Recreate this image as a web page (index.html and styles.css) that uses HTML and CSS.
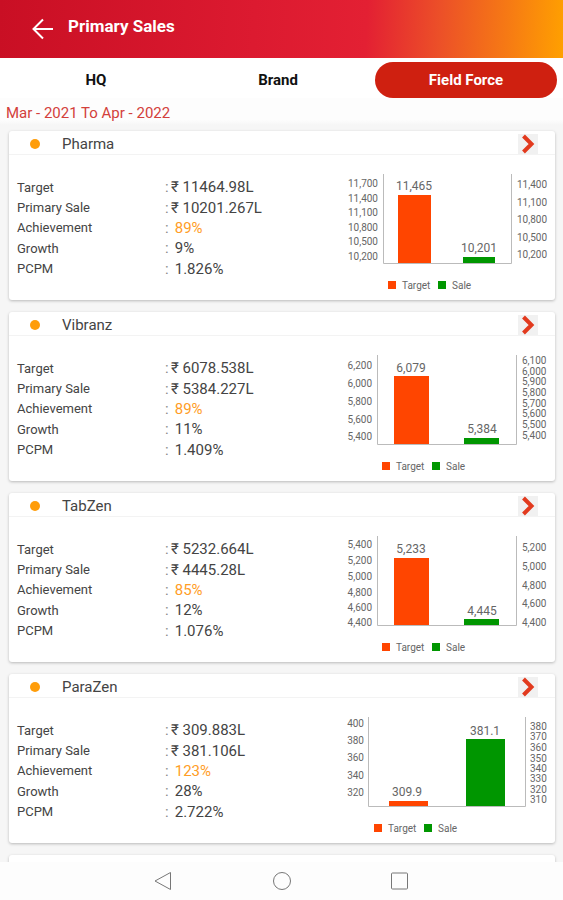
FILE: index.html
```html
<!DOCTYPE html>
<html lang="en">
<head>
<meta charset="utf-8">
<meta name="viewport" content="width=device-width, initial-scale=1">
<title>Primary Sales</title>
<link rel="stylesheet" href="styles.css">
</head>
<body>
<div class="app">
  <header class="topbar">
    <button class="back" type="button" aria-label="Back"><svg width="24" height="24" viewBox="0 0 24 24"><path d="M23 12H4M13 2.500L3.500 12l9.500 9.500"/></svg></button>
    <h1>Primary Sales</h1>
  </header>
  <nav class="tabs">
    <button class="tab" type="button">HQ</button>
    <button class="tab" type="button">Brand</button>
    <button class="tab active" type="button">Field Force</button>
  </nav>
  <p class="period">Mar - 2021 To Apr - 2022</p>
  <main class="list">
    <article class="card">
      <header class="card-head"><span class="dot"></span><h2>Pharma</h2><button class="open" type="button" aria-label="Open Pharma"><svg width="20" height="20" viewBox="0 0 20 20"><path d="M5.500 2L13.500 10l-8 8"/></svg></button></header>
      <div class="card-body">
        <dl>
          <dt>Target</dt><dd><i>:</i>₹ 11464.98L</dd>
          <dt>Primary Sale</dt><dd><i>:</i>₹ 10201.267L</dd>
          <dt>Achievement</dt><dd><i>:</i> <b>89%</b></dd>
          <dt>Growth</dt><dd><i>:</i> 9%</dd>
          <dt>PCPM</dt><dd><i>:</i> 1.826%</dd>
        </dl>
        <svg class="chart" viewBox="0 0 212 140">
          <path class="axis" d="M42.500 19V108.500H170.500V19"/>
          <rect class="target" x="57" y="40" width="33" height="68"/>
          <rect class="sale" x="122" y="102" width="32" height="6"/>
          <g class="value"><text x="73" y="35">11,465</text><text x="138" y="97">10,201</text></g>
          <g class="left"><text x="37" y="32">11,700</text><text x="37" y="47">11,400</text><text x="37" y="61">11,100</text><text x="37" y="76">10,800</text><text x="37" y="90">10,500</text><text x="37" y="105">10,200</text></g>
          <g class="right"><text x="176" y="33">11,400</text><text x="176" y="51">11,100</text><text x="176" y="68">10,800</text><text x="176" y="86">10,500</text><text x="176" y="103">10,200</text></g>
          <rect class="target" x="47" y="126" width="8" height="8"/><text x="61" y="134">Target</text>
          <rect class="sale" x="97" y="126" width="8" height="8"/><text x="111" y="134">Sale</text>
        </svg>
      </div>
    </article>
    <article class="card">
      <header class="card-head"><span class="dot"></span><h2>Vibranz</h2><button class="open" type="button" aria-label="Open Vibranz"><svg width="20" height="20" viewBox="0 0 20 20"><path d="M5.500 2L13.500 10l-8 8"/></svg></button></header>
      <div class="card-body">
        <dl>
          <dt>Target</dt><dd><i>:</i>₹ 6078.538L</dd>
          <dt>Primary Sale</dt><dd><i>:</i>₹ 5384.227L</dd>
          <dt>Achievement</dt><dd><i>:</i> <b>89%</b></dd>
          <dt>Growth</dt><dd><i>:</i> 11%</dd>
          <dt>PCPM</dt><dd><i>:</i> 1.409%</dd>
        </dl>
        <svg class="chart" viewBox="0 0 212 140">
          <path class="axis" d="M36.500 19V108.500H175.500V19"/>
          <rect class="target" x="53" y="40" width="35" height="68"/>
          <rect class="sale" x="123" y="102" width="35" height="6"/>
          <g class="value"><text x="70" y="36">6,079</text><text x="141" y="97">5,384</text></g>
          <g class="left"><text x="31" y="33">6,200</text><text x="31" y="51">6,000</text><text x="31" y="69">5,800</text><text x="31" y="87">5,600</text><text x="31" y="104">5,400</text></g>
          <g class="right"><text x="181" y="28">6,100</text><text x="181" y="39">6,000</text><text x="181" y="49">5,900</text><text x="181" y="60">5,800</text><text x="181" y="71">5,700</text><text x="181" y="81">5,600</text><text x="181" y="92">5,500</text><text x="181" y="103">5,400</text></g>
          <rect class="target" x="41" y="126" width="8" height="8"/><text x="55" y="134">Target</text>
          <rect class="sale" x="91" y="126" width="8" height="8"/><text x="105" y="134">Sale</text>
        </svg>
      </div>
    </article>
    <article class="card">
      <header class="card-head"><span class="dot"></span><h2>TabZen</h2><button class="open" type="button" aria-label="Open TabZen"><svg width="20" height="20" viewBox="0 0 20 20"><path d="M5.500 2L13.500 10l-8 8"/></svg></button></header>
      <div class="card-body">
        <dl>
          <dt>Target</dt><dd><i>:</i>₹ 5232.664L</dd>
          <dt>Primary Sale</dt><dd><i>:</i>₹ 4445.28L</dd>
          <dt>Achievement</dt><dd><i>:</i> <b>85%</b></dd>
          <dt>Growth</dt><dd><i>:</i> 12%</dd>
          <dt>PCPM</dt><dd><i>:</i> 1.076%</dd>
        </dl>
        <svg class="chart" viewBox="0 0 212 140">
          <path class="axis" d="M36.500 19V108.500H175.500V19"/>
          <rect class="target" x="53" y="41" width="35" height="67"/>
          <rect class="sale" x="123" y="102" width="35" height="6"/>
          <g class="value"><text x="70" y="36">5,233</text><text x="141" y="98">4,445</text></g>
          <g class="left"><text x="31" y="31">5,400</text><text x="31" y="47">5,200</text><text x="31" y="63">5,000</text><text x="31" y="79">4,800</text><text x="31" y="94">4,600</text><text x="31" y="109">4,400</text></g>
          <g class="right"><text x="181" y="34">5,200</text><text x="181" y="53">5,000</text><text x="181" y="72">4,800</text><text x="181" y="90">4,600</text><text x="181" y="109">4,400</text></g>
          <rect class="target" x="41" y="126" width="8" height="8"/><text x="55" y="134">Target</text>
          <rect class="sale" x="91" y="126" width="8" height="8"/><text x="105" y="134">Sale</text>
        </svg>
      </div>
    </article>
    <article class="card">
      <header class="card-head"><span class="dot"></span><h2>ParaZen</h2><button class="open" type="button" aria-label="Open ParaZen"><svg width="20" height="20" viewBox="0 0 20 20"><path d="M5.500 2L13.500 10l-8 8"/></svg></button></header>
      <div class="card-body">
        <dl>
          <dt>Target</dt><dd><i>:</i>₹ 309.883L</dd>
          <dt>Primary Sale</dt><dd><i>:</i>₹ 381.106L</dd>
          <dt>Achievement</dt><dd><i>:</i> <b>123%</b></dd>
          <dt>Growth</dt><dd><i>:</i> 28%</dd>
          <dt>PCPM</dt><dd><i>:</i> 2.722%</dd>
        </dl>
        <svg class="chart" viewBox="0 0 212 140">
          <path class="axis" d="M27.500 19V108.500H184.500V19"/>
          <rect class="target" x="48" y="103" width="39" height="5"/>
          <rect class="sale" x="125" y="41" width="39" height="67"/>
          <g class="value"><text x="66" y="98">309.9</text><text x="144" y="37">381.1</text></g>
          <g class="left"><text x="23" y="29">400</text><text x="23" y="46">380</text><text x="23" y="63">360</text><text x="23" y="81">340</text><text x="23" y="98">320</text></g>
          <g class="right"><text x="189" y="32">380</text><text x="189" y="42">370</text><text x="189" y="53">360</text><text x="189" y="64">350</text><text x="189" y="74">340</text><text x="189" y="84">330</text><text x="189" y="95">320</text><text x="189" y="105">310</text></g>
          <rect class="target" x="33" y="126" width="8" height="8"/><text x="47" y="134">Target</text>
          <rect class="sale" x="83" y="126" width="8" height="8"/><text x="97" y="134">Sale</text>
        </svg>
      </div>
    </article>
    <article class="card"></article>
  </main>
  <nav class="system">
    <button type="button" aria-label="Back"><svg width="20" height="20" viewBox="0 0 20 20"><path d="M16.500 1.500v17L1 10z"/></svg></button>
    <button type="button" aria-label="Home"><svg width="20" height="20" viewBox="0 0 20 20"><circle cx="10" cy="10" r="8.500"/></svg></button>
    <button type="button" aria-label="Recent apps"><svg width="20" height="20" viewBox="0 0 20 20"><rect x="1.500" y="2" width="16" height="16" rx="1"/></svg></button>
  </nav>
</div>
</body>
</html>
```
FILE: styles.css
```css
* { box-sizing: border-box; }

body {
  margin: 0;
  font-family: Roboto, "Liberation Sans", sans-serif;
  color: #444;
  background: #f6f6f6;
}

h1, h2, p, dl, dd { margin: 0; }

button {
  padding: 0;
  border: 0;
  background: none;
  font: inherit;
  color: inherit;
}

svg { display: block; fill: none; }

.app {
  display: flex;
  flex-direction: column;
  height: 100vh;
}

.topbar {
  flex: none;
  display: flex;
  align-items: center;
  gap: 14px;
  height: 58px;
  padding: 0 30px;
  color: #fff;
  background: linear-gradient(93deg, #c90f24 0%, #dc1a30 45%, #e32033 65%, #ec5028 78%, #f67a14 90%, #ffa000 100%);
}

.topbar h1 {
  padding-bottom: 6px;
  font-size: 17px;
  line-height: 20px;
  font-weight: 700;
}

.back svg { stroke: #fff; stroke-width: 2; }

.tabs {
  flex: none;
  display: grid;
  grid-template-columns: 182fr 182fr 188fr;
  height: 40px;
  padding: 4px 6px 0 5px;
  background: #fff;
}

.tab {
  height: 36px;
  border-radius: 18px;
  font-size: 15px;
  font-weight: 700;
  color: #111;
}

.tab.active {
  margin-left: 6px;
  background: #cf2010;
  color: #fff;
}

.period {
  flex: none;
  height: 27px;
  padding: 5px 6px 0;
  font-size: 15px;
  line-height: 20px;
  color: #d3403b;
  background: linear-gradient(#fdfdfd 80%, #f6f6f6);
}

.list {
  flex: 1;
  min-height: 0;
  display: flex;
  flex-direction: column;
  gap: 12px;
  padding: 6px 8px 0 9px;
  overflow: hidden;
}

.card {
  flex: none;
  height: 169px;
  border-radius: 3px;
  background: #fff;
  box-shadow: 0 1px 3px rgba(0, 0, 0, 0.25);
}

.card-head {
  display: flex;
  align-items: center;
  height: 24px;
  padding: 3px 17px 0 21px;
  border-bottom: 1px solid #f3f3f3;
}

.dot {
  width: 10px;
  height: 10px;
  margin-right: 22px;
  border-radius: 50%;
  background: #ff9d0a;
}

.card-head h2 {
  flex: 1;
  font-size: 15px;
  line-height: 20px;
  font-weight: 400;
}

.open { background: #f1f1f1; }
.open svg { stroke: #e23a1e; stroke-width: 4; }

.card-body {
  display: flex;
  justify-content: space-between;
  padding: 0 2px 0 8px;
}

.card-body dl {
  flex: 1;
  display: grid;
  grid-template-columns: 148fr 176fr;
  grid-auto-rows: 1fr;
  align-items: center;
  height: 102px;
  margin-top: 22px;
}

dt { font-size: 13px; }
dd { font-size: 15px; white-space: pre; }
dd i { display: inline-block; width: 6px; font-style: normal; color: #888; }
dd b { font-weight: 400; color: #ff9d26; }

.chart { width: 212px; height: 140px; }
.chart text { font-size: 10px; fill: #666; }
.chart .value text { font-size: 12px; text-anchor: middle; }
.chart .left text { text-anchor: end; }
.axis { stroke: #bbb; }
.target { fill: #ff4500; }
.sale { fill: #009600; }

.system {
  flex: none;
  display: flex;
  justify-content: center;
  gap: 98px;
  height: 38px;
  background: #fdfdfd;
}

.system svg { stroke: #777; stroke-width: 1; }
```
